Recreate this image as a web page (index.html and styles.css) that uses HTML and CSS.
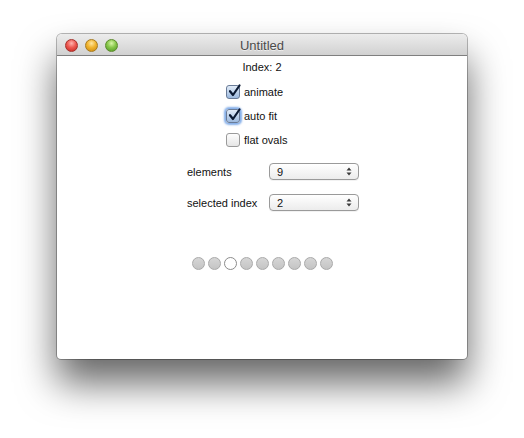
FILE: index.html
```html
<!DOCTYPE html>
<html lang="en">
<head>
    <meta charset="UTF-8">
    <title>Untitled</title>
    <link rel="stylesheet" href="styles.css">
</head>
<body>
    <div class="window">
        <div class="titlebar">
            <div class="lights">
                <span class="light red"></span>
                <span class="light yellow"></span>
                <span class="light green"></span>
            </div>
            <div class="title">Untitled</div>
        </div>

        <div class="content">
            <div class="index-label">Index: 2</div>

            <!-- Opções -->
            <div class="checks">
                <label class="check-row">
                    <span class="box checked">
                        <svg viewBox="0 0 14 14"><path d="M3 7.2 L6 11 L12.5 1.5" /></svg>
                    </span>
                    animate
                </label>
                <label class="check-row">
                    <span class="box checked focus">
                        <svg viewBox="0 0 14 14"><path d="M3 7.2 L6 11 L12.5 1.5" /></svg>
                    </span>
                    auto fit
                </label>
                <label class="check-row">
                    <span class="box"></span>
                    flat ovals
                </label>
            </div>

            <div class="form">
                <div class="form-label">elements</div>
                <div class="popup">
                    <span>9</span>
                    <svg class="arrows" viewBox="0 0 6 9"><path d="M0.5 3.5 L3 0.5 L5.5 3.5 Z M0.5 5.5 L3 8.5 L5.5 5.5 Z" /></svg>
                </div>
                <div class="form-label">selected index</div>
                <div class="popup">
                    <span>2</span>
                    <svg class="arrows" viewBox="0 0 6 9"><path d="M0.5 3.5 L3 0.5 L5.5 3.5 Z M0.5 5.5 L3 8.5 L5.5 5.5 Z" /></svg>
                </div>
            </div>

            <div class="dots">
                <span class="dot"></span>
                <span class="dot"></span>
                <span class="dot active"></span>
                <span class="dot"></span>
                <span class="dot"></span>
                <span class="dot"></span>
                <span class="dot"></span>
                <span class="dot"></span>
                <span class="dot"></span>
            </div>
        </div>
    </div>
</body>
</html>
```

FILE: styles.css
```css
html, body {
    height: 100%;
}

body {
    margin: 0;
    padding-top: 34px;
    box-sizing: border-box;
    background: #fff;
    font-family: 'Liberation Sans', Arial, sans-serif;
    font-size: 11px;
    color: #111;
}

.window {
    width: 410px;
    height: 325px;
    margin-left: 57px;
    display: flex;
    flex-direction: column;
    border-radius: 5px 5px 4px 4px;
    background: #fff;
    box-shadow: 0 0 0 1px rgba(0,0,0,0.28), 0 24px 38px rgba(0,0,0,0.6);
    overflow: hidden;
}

.titlebar {
    height: 22px;
    flex-shrink: 0;
    position: relative;
    display: flex;
    align-items: center;
    justify-content: center;
    padding-top: 2px;
    background: linear-gradient(#ececec, #d1d1d1);
    border-bottom: 1px solid #7f7f7f;
    box-sizing: border-box;
}

.lights {
    position: absolute;
    left: 8px;
    top: 5px;
    display: flex;
    gap: 7px;
}

.light {
    width: 13px;
    height: 13px;
    border-radius: 50%;
    box-sizing: border-box;
}

.red {
    background: radial-gradient(circle at 50% 30%, #ffb3ae 0, #ee5a52 45%, #c4231d 100%);
    border: 1px solid #a5302b;
}

.yellow {
    background: radial-gradient(circle at 50% 30%, #ffe6a0 0, #f1b52f 45%, #c9860c 100%);
    border: 1px solid #a77a1e;
}

.green {
    background: radial-gradient(circle at 50% 30%, #d8f5a8 0, #88c84a 45%, #4e9524 100%);
    border: 1px solid #5c8a2c;
}

.title {
    font-size: 13px;
    color: #4a4a4a;
    text-shadow: 0 1px 0 rgba(255,255,255,0.6);
}

.content {
    flex: 1;
    display: flex;
    flex-direction: column;
    align-items: center;
    padding-top: 4px;
}

.index-label {
    line-height: 14px;
}

.checks {
    margin-top: 10px;
    align-self: flex-start;
    margin-left: 169px;
    display: flex;
    flex-direction: column;
    gap: 8px;
}

.check-row {
    display: flex;
    align-items: center;
    gap: 4px;
    height: 16px;
    line-height: 16px;
}

.box {
    width: 14px;
    height: 14px;
    box-sizing: border-box;
    border: 1px solid #9a9a9a;
    border-radius: 3px;
    background: linear-gradient(#fdfdfd, #e6e6e6);
    display: flex;
    align-items: center;
    justify-content: center;
}

.box.checked {
    border-color: #6a7c98;
    background: linear-gradient(#e2ecf8, #9cb9de);
}

.box.focus {
    box-shadow: 0 0 2px 2px rgba(92, 148, 225, 0.75);
}

.box svg {
    width: 14px;
    height: 14px;
    margin: -2px -1px 0 1px;
    overflow: visible;
}

.box svg path {
    fill: none;
    stroke: #0c1a33;
    stroke-width: 2.2;
    stroke-linecap: round;
    stroke-linejoin: round;
}

.form {
    margin-top: 15px;
    align-self: flex-start;
    margin-left: 130px;
    display: grid;
    grid-template-columns: 82px 90px;
    row-gap: 14px;
    align-items: center;
}

.popup {
    height: 17px;
    box-sizing: border-box;
    border: 1px solid #9a9a9a;
    border-radius: 4px;
    background: linear-gradient(#ffffff, #ececec);
    box-shadow: 0 1px 0 rgba(0,0,0,0.05);
    display: flex;
    align-items: center;
    justify-content: space-between;
    padding: 0 6px 0 7px;
}

.arrows {
    width: 6px;
    height: 9px;
}

.arrows path {
    fill: #3a3a3a;
}

.dots {
    margin-top: 46px;
    display: flex;
    gap: 3px;
}

.dot {
    width: 13px;
    height: 13px;
    box-sizing: border-box;
    border-radius: 50%;
    border: 1px solid #a9a9a9;
    background: linear-gradient(#d6d6d6, #c4c4c4);
}

.dot.active {
    background: #fff;
    border-color: #8c8c8c;
}
```
